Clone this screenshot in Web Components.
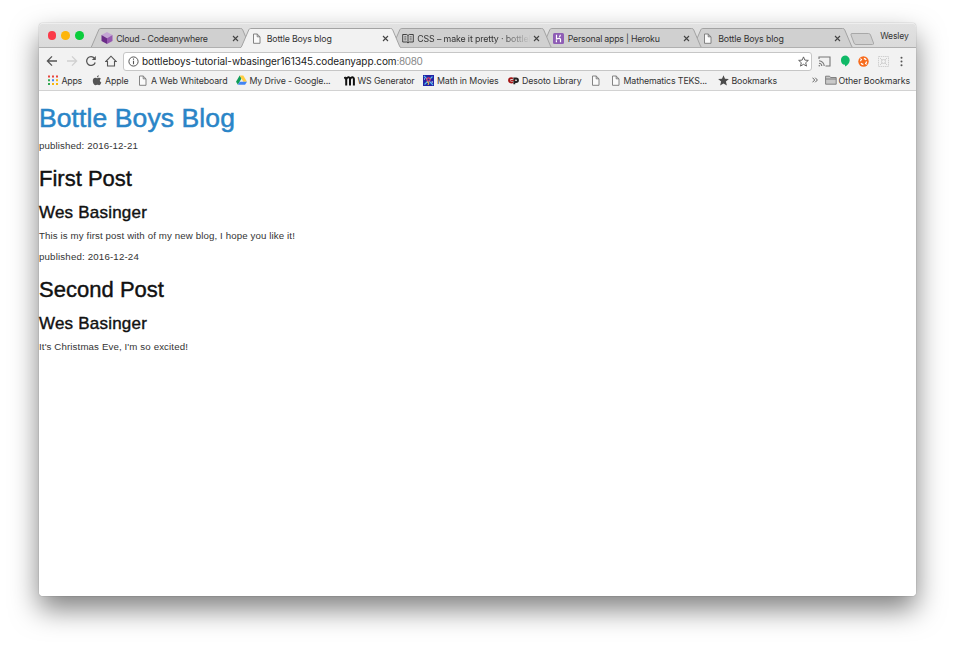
<!DOCTYPE html>
<html lang="en"><head><meta charset="utf-8"><title>Bottle Boys blog</title>
<style>
html,body{margin:0;background:#fff;height:652px;overflow:hidden}
body{display:flow-root;font-family:Inter,"Liberation Sans",sans-serif;color:#333}
</style></head><body>
<browser-window></browser-window>
<script>
const file='<svg width="9" height="11" viewBox="0 0 9 11" fill="#fafafa" stroke="#777" stroke-width=".9"><path d="M1.500 1h3.700L8 3.800v6.500H1.500zM5.200 1v2.800H8"/></svg>';
const icons={
 file,
 cube:'<svg width="12" height="12" viewBox="0 0 12 12"><path d="M6 0l5.500 3L6 6.300.5 3z" fill="#c4a5d4"/><path d="M.5 3L6 6.300V12L.5 9z" fill="#6b2c88"/><path d="M11.500 3L6 6.300V12l5.500-3z" fill="#9658b0"/></svg>',
 book:'<svg width="12" height="11" viewBox="0 0 12 11" fill="none" stroke="#333" stroke-width=".9"><path d="M.7 1.500h4L6 2.500l1.300-1h4v7.500h-4L6 10 4.700 9h-4zM6 2.500V10"/><path d="M2.300 3.700h2M2.300 5.200h2M2.300 6.800h2M7.700 3.700h2M7.700 5.200h2M7.700 6.800h2" stroke-width=".6"/></svg>',
 heroku:'<svg width="11" height="11" viewBox="0 0 11 11"><rect width="11" height="11" rx="1.500" fill="#8e5db5"/><path d="M3.500 1.800V6c2.200-1 4-.9 4 .6v2.700M7.300 1.800c0 1-.4 1.600-1 2.200M3.400 7.300v2" fill="none" stroke="#fff" stroke-width="1.200"/></svg>',
 apps:'<svg width="10" height="10" viewBox="0 0 10 10"><path d="M0 .5h2v2H0zM4 .5h2v2H4z" fill="#e8453c"/><path d="M8 .5h2v2H8z" fill="#e8453c"/><path d="M0 4.300h2v2H0z" fill="#34a853"/><path d="M4 4.300h2v2H4z" fill="#4285f4"/><path d="M8 4.300h2v2H8zM4 8h2v2H4zM8 8h2v2H8z" fill="#f9b60b"/><path d="M0 8h2v2H0z" fill="#34a853"/></svg>',
 apple:'<svg width="10" height="11" viewBox="0 0 10 11" fill="#555"><path d="M6.800.3c.1 1.200-.8 2.200-1.900 2.200C4.800 1.400 5.700.5 6.800.3zM5 3.200c.6 0 1.100-.5 2-.5.8 0 1.500.4 1.900 1-1.600 1-1.300 3.100.4 3.700-.5 1.400-1.300 2.800-2.300 2.800-.7 0-1-.4-1.800-.4s-1.200.4-1.800.4C2 10.200.7 7.800.8 5.800c0-2 1.200-3.100 2.500-3.100.7 0 1.200.5 1.700.5z"/></svg>',
 drive:'<svg width="11" height="10" viewBox="0 0 11 10"><path d="M3.700.5L0 6.800l1.900 3L5.500 3.600z" fill="#0f9d58"/><path d="M3.700.5h3.600L11 6.800H7.300z" fill="#ffcd40"/><path d="M3.800 6.800H11l-1.900 3H1.900z" fill="#4285f4"/></svg>',
 ws:'<svg width="12" height="11" viewBox="0 0 12 11" fill="none" stroke="#111" stroke-width="2"><path d="M2.200 10.500V4.500L.5 2M2.200 4.500C2.700 1.700 6 1.500 6 4v6.500M6 4.500c.5-2.800 3.900-3 3.900-.5v6.500"/></svg>',
 math:'<svg width="11" height="11" viewBox="0 0 11 11"><rect width="11" height="11" fill="#2323a5"/><path d="M1 1l9 9M9.500 1.500l-8 8" stroke="#55bdf0" stroke-width="1.100"/><circle cx="5.500" cy="4.500" r="2.300" fill="#d84065"/><circle cx="5.500" cy="4.500" r="1" fill="#2323a5"/><path d="M4 7l2 1-1 2" stroke="#f3cf48" fill="none"/><path d="M1 4h1M8.500 7h1.500" stroke="#fff"/></svg>',
 desoto:'<svg width="11" height="9" viewBox="0 0 11 9" fill="none" stroke-width="1.900"><path d="M5 2.500C2.700 1.500 1 2.600 1 4.300S2.700 7 5 6.200" stroke="#a41616"/><path d="M6.300 8.200V2.500h1.800c2.500 0 2.500 3.500 0 3.500H6" stroke="#222"/><path d="M2.500 4.400h4" stroke="#a41616" stroke-width="1"/></svg>',
 star:'<svg width="11" height="11" viewBox="0 0 11 11" fill="#4c4c4c"><path d="M5.500.2l1.500 3.600 3.900.3-3 2.500 1 3.900-3.400-2.100-3.400 2.100 1-3.900-3-2.500 3.900-.3z"/></svg>',
 folder:'<svg width="12" height="10" viewBox="0 0 12 10" fill="#c9c9c9" stroke="#777" stroke-width=".9"><path d="M.6 9.200V1.200h4l1 1.300h5.600v6.700zM.6 4h10.600"/></svg>',
 back:'<svg width="12" height="12" viewBox="0 0 12 12" fill="none" stroke="#555" stroke-width="1.300"><path d="M11 6H1.500M6 1.400L1.400 6 6 10.600"/></svg>',
 forward:'<svg width="12" height="12" viewBox="0 0 12 12" fill="none" stroke="#d0d0d0" stroke-width="1.300"><path d="M1 6h9.500M6 1.400L10.600 6 6 10.600"/></svg>',
 reload:'<svg width="12" height="12" viewBox="0 0 12 12" fill="none" stroke="#555" stroke-width="1.300"><path d="M9.500 3.300A4.400 4.400 0 1 0 10.200 7.500"/><path d="M10.800 1v4H6.800z" fill="#555" stroke="none"/></svg>',
 home:'<svg width="12" height="12" viewBox="0 0 12 12" fill="none" stroke="#555" stroke-width="1.100"><path d="M.8 6.500L6 1.200l5.200 5.300H9.500V11h-7V6.500z"/></svg>',
 info:'<svg width="11" height="11" viewBox="0 0 11 11" fill="none" stroke="#555"><circle cx="5.500" cy="5.500" r="4.600"/><path d="M5.500 4.800v3.400M5.500 2.600v1.200" stroke-width="1.100"/></svg>',
 outline:'<svg width="11" height="11" viewBox="0 0 11 11" fill="none" stroke="#555" stroke-width=".9"><path d="M5.500.9l1.350 3.200 3.500.3-2.650 2.300.8 3.400-3-1.800-3 1.800.8-3.400L.650 4.400l3.500-.3z"/></svg>',
 cast:'<svg width="13" height="11" viewBox="0 0 13 11" fill="none" stroke="#777" stroke-width="1.100"><path d="M1 3V1h11v9H7.500M1 4.700A5.300 5.300 0 0 1 6.200 10M1 7.200A2.800 2.800 0 0 1 3.800 10"/><circle cx="1.300" cy="9.700" r=".8" fill="#777" stroke="none"/></svg>',
 hang:'<svg width="10" height="12" viewBox="0 0 10 12"><path d="M5 .5a4.700 4.700 0 0 1 4.700 4.700c0 2.800-2.200 5.100-4.700 6.300V9.800A4.700 4.700 0 0 1 5 .5z" fill="#0fb967"/></svg>',
 orange:'<svg width="11" height="11" viewBox="0 0 11 11"><circle cx="5.500" cy="5.500" r="5.200" fill="#f76b1c"/><circle cx="5.500" cy="5.500" r="3" fill="none" stroke="#fff" stroke-width="1.300" stroke-dasharray="2.700 2.010"/><path d="M2.500 2.500l1.500 1.500M8.500 8.500L7 7" stroke="#fff"/></svg>',
 grid:'<svg width="11" height="11" viewBox="0 0 11 11" fill="none" stroke="#cfcfcf"><path d="M.5.5h10v10H.5z" stroke-dasharray="1.500 .7"/><circle cx="5.500" cy="5.500" r="2"/><path d="M2 2l2 2M9 2L7 4M2 9l2-2M9 9L7 7"/></svg>',
 dots:'<svg width="3" height="11" viewBox="0 0 3 11" fill="#555"><circle cx="1.500" cy="1.700" r="1"/><circle cx="1.500" cy="5.500" r="1"/><circle cx="1.500" cy="9.300" r="1"/></svg>',
 more:'<svg width="6" height="6" viewBox="0 0 6 6" fill="none" stroke="#555" stroke-width=".9"><path d="M.5.7L2.700 3 .5 5.300M3.200.7L5.400 3 3.200 5.300"/></svg>'
};
const define=(name,render,after)=>customElements.define(name,class extends HTMLElement{
 connectedCallback(){if(this.shadowRoot)return;const t=document.createElement('template');t.innerHTML=render(this);
 this.attachShadow({mode:'open'}).append(t.content.cloneNode(true));if(after)after(this)}});

/* A line of text tracked out to a given measure. */
define('tracked-text',()=>`<style>:host{display:inline-block;white-space:pre;flex:none}span{display:inline-block}</style><span><slot></slot></span>`,
 el=>{const s=el.shadowRoot.querySelector('span'),w=+el.getAttribute('w');
 s.style.letterSpacing=(w-s.getBoundingClientRect().width)/el.textContent.length+'px';el.style.width=w+'px'});
define('ui-icon',el=>`<style>:host{display:block;flex:none}svg{display:block}</style>${icons[el.getAttribute('name')]}`);

define('browser-tab',el=>{const on=el.hasAttribute('active'),fill=on?'#f2f2f2':'#d0d0d0';return `<style>
:host{display:grid;grid-template-columns:minmax(0,1fr);width:161.500px;height:20px;margin-right:-11px;flex:none;position:relative;z-index:${el.getAttribute('level')}}
:host>*{grid-area:1/1}.row{display:flex;align-items:center;padding:0 12.500px 0 11.500px;font-size:8.800px;color:#333}
.ic{width:14.500px;display:flex;margin-right:.5px}.label{flex:1;min-width:0;overflow:hidden;display:flex}
.fade{-webkit-mask:linear-gradient(90deg,#000 72%,transparent 98%)}.x{width:7px;flex:none}</style>
<svg width="162" height="20" viewBox="0 0 162 20"><path d="M0 20Q1.200 19.700 1.800 18L8.800 1.800Q9.300.5 10.800.5H150.700Q152.200.5 152.700 1.800L159.500 18Q160.200 19.700 161.500 20" fill="${fill}" stroke="#a3a3a3"/>${on?'':'<path d="M0 19.500H162" stroke="#b0b0b0"/>'}</svg>
<div class="row"><div class="ic"><ui-icon name="${el.getAttribute('icon')}"></ui-icon></div><div class="label ${el.hasAttribute('fade')?'fade':''}"><slot></slot></div><svg class="x" width="7" height="7" viewBox="0 0 7 7"><path d="M1 1l5 5M6 1L1 6" stroke="#444" stroke-width="1.100"/></svg></div>`});

define('tab-strip',()=>`<style>
:host{display:flex;height:25px;box-sizing:border-box;background:linear-gradient(#e2e2e2,#dadada);box-shadow:inset 0 -1px #b0b0b0,inset 0 1px #eee;padding-top:5px}
.lights{display:flex;gap:5.300px;padding:3.300px 0 0 8.500px;width:42.200px}.lights i{width:8.700px;height:8.700px;border-radius:50%}
.new{margin:5px 0 0 7.500px}.user{font-size:8.600px;margin:3px 0 0 5.500px;color:#333}</style>
<div class="lights"><i style="background:#fb3b4a"></i><i style="background:#fdb50c"></i><i style="background:#0bcd3c"></i></div>
<browser-tab icon="cube" level="3"><tracked-text w="91.500">Cloud - Codeanywhere</tracked-text></browser-tab>
<browser-tab icon="file" active level="5"><tracked-text w="65">Bottle Boys blog</tracked-text></browser-tab>
<browser-tab icon="book" fade level="3"><tracked-text w="131">CSS – make it pretty · bottleboys</tracked-text></browser-tab>
<browser-tab icon="heroku" level="2"><tracked-text w="92">Personal apps | Heroku</tracked-text></browser-tab>
<browser-tab icon="file" level="1"><tracked-text w="65.500">Bottle Boys blog</tracked-text></browser-tab>
<svg class="new" width="25" height="12" viewBox="0 0 25 12"><path d="M2 .5h16.500q1.500 0 2 1.500l3 8q.5 1.500-1 1.500H6q-1.500 0-2-1.500L1 2Q.5.5 2 .5z" fill="#d0d0d0" stroke="#a8a8a8"/></svg>
<div class="user"><tracked-text w="28.500">Wesley</tracked-text></div>`);

define('address-bar',()=>`<style>
:host{display:flex;align-items:center;height:25px;box-sizing:border-box;background:#f2f2f2;padding:1px 11.500px 0 7px}
.nav{display:flex;gap:7.500px;width:77px}
.field{display:flex;align-items:center;width:689px;height:19px;box-sizing:border-box;background:#fff;border:1px solid #c6c6c6;border-radius:3px;padding:0 2px 0 3.500px;font-size:10px;color:#222;margin-left:0}
.field ui-icon{margin-right:3.500px}.field .last{margin:0 0 0 auto}.port{color:#888}
.ext{display:flex;align-items:center;gap:8.600px;flex:1;padding-left:6px}</style>
<div class="nav"><ui-icon name="back"></ui-icon><ui-icon name="forward"></ui-icon><ui-icon name="reload"></ui-icon><ui-icon name="home"></ui-icon></div>
<div class="field"><ui-icon name="info"></ui-icon><tracked-text w="254.500">bottleboys-tutorial-wbasinger161345.codeanyapp.com</tracked-text><tracked-text class="port" w="26">:8080</tracked-text><ui-icon class="last" name="outline"></ui-icon></div>
<div class="ext"><ui-icon name="cast"></ui-icon><ui-icon name="hang"></ui-icon><ui-icon name="orange"></ui-icon><ui-icon name="grid"></ui-icon><ui-icon name="dots" style="margin-left:3px"></ui-icon></div>`);

define('book-mark',el=>`<style>:host{display:flex;align-items:center;flex:none;height:100%}.i{width:${el.getAttribute('iw')}px}</style><div class="i"><ui-icon name="${el.getAttribute('icon')}"></ui-icon></div><slot></slot>`);
const marks=[['apps',47.500,61.500,20.500,'Apps'],['apple',91.500,105,23.500,'Apple'],['file',138,151,76.500,'A Web Whiteboard'],['drive',236,249.500,81,'My Drive - Google...'],['ws',344,357.500,57,'WS Generator'],['math',423,437,61.500,'Math in Movies'],['desoto',508,522,59.500,'Desoto Library'],['file',591,602,0,''],['file',611,623.500,83.500,'Mathematics TEKS...'],['star',718,731.500,45.500,'Bookmarks'],['more',812,818,0,''],['folder',824.500,838.500,71.500,'Other Bookmarks']];
define('bookmarks-bar',()=>{let at=39;return `<style>:host{display:flex;align-items:center;height:18px;box-sizing:border-box;background:#f2f2f2;border-bottom:1px solid #d2d2d2;font-size:8.800px;color:#333;padding-bottom:3px}</style>`+
 marks.map(([i,x,tx,w,t])=>{const gap=x-at;at=tx+w;return `<book-mark icon="${i}" iw="${tx-x}" style="margin-left:${gap}px">${t?`<tracked-text w="${w}">${t}</tracked-text>`:''}</book-mark>`}).join('')});

define('blog-post',el=>`<style>:host{display:block}p,h2,h3{margin:0}p{font-size:9.700px;line-height:14px;color:#333}
h2,h3{color:#111;font-weight:400;-webkit-text-stroke:.4px #111}
h2{font-size:22px;line-height:24px;margin-top:13.500px}h3{font-size:17px;line-height:18px;margin:13.500px 0 7px}</style>
<p><slot name="date"></slot></p><h2><slot name="title"></slot></h2><h3><slot name="author"></slot></h3><p><slot name="body"></slot></p>`);
define('blog-page',()=>`<style>:host{display:block;flex:1;background:#fff;font-family:"Liberation Sans",Arial,sans-serif;padding-top:13px}
h1{margin:0 0 6px;font-size:26.500px;line-height:29px;font-weight:400;color:#2a85c7;-webkit-text-stroke:.5px #2a85c7}blog-post+blog-post{margin-top:7px}</style>
<h1><tracked-text w="196">Bottle Boys Blog</tracked-text></h1>
<blog-post><tracked-text slot="date" w="99">published: 2016-12-21</tracked-text><tracked-text slot="title" w="93">First Post</tracked-text><tracked-text slot="author" w="108">Wes Basinger</tracked-text><tracked-text slot="body" w="256">This is my first post with of my new blog, I hope you like it!</tracked-text></blog-post>
<blog-post><tracked-text slot="date" w="100">published: 2016-12-24</tracked-text><tracked-text slot="title" w="125">Second Post</tracked-text><tracked-text slot="author" w="108">Wes Basinger</tracked-text><tracked-text slot="body" w="149">It's Christmas Eve, I'm so excited!</tracked-text></blog-post>`);
define('browser-window',()=>`<style>:host{display:flex;flex-direction:column;width:877px;height:573px;margin:23px 0 0 39px;border-radius:4px;background:#fff;box-shadow:0 0 1px rgba(0,0,0,.55),0 13px 28px rgba(0,0,0,.5)}
tab-strip{border-radius:4px 4px 0 0}blog-page{border-radius:0 0 4px 4px}</style>
<tab-strip></tab-strip><address-bar></address-bar><bookmarks-bar></bookmarks-bar><blog-page></blog-page>`);
</script></body></html>
